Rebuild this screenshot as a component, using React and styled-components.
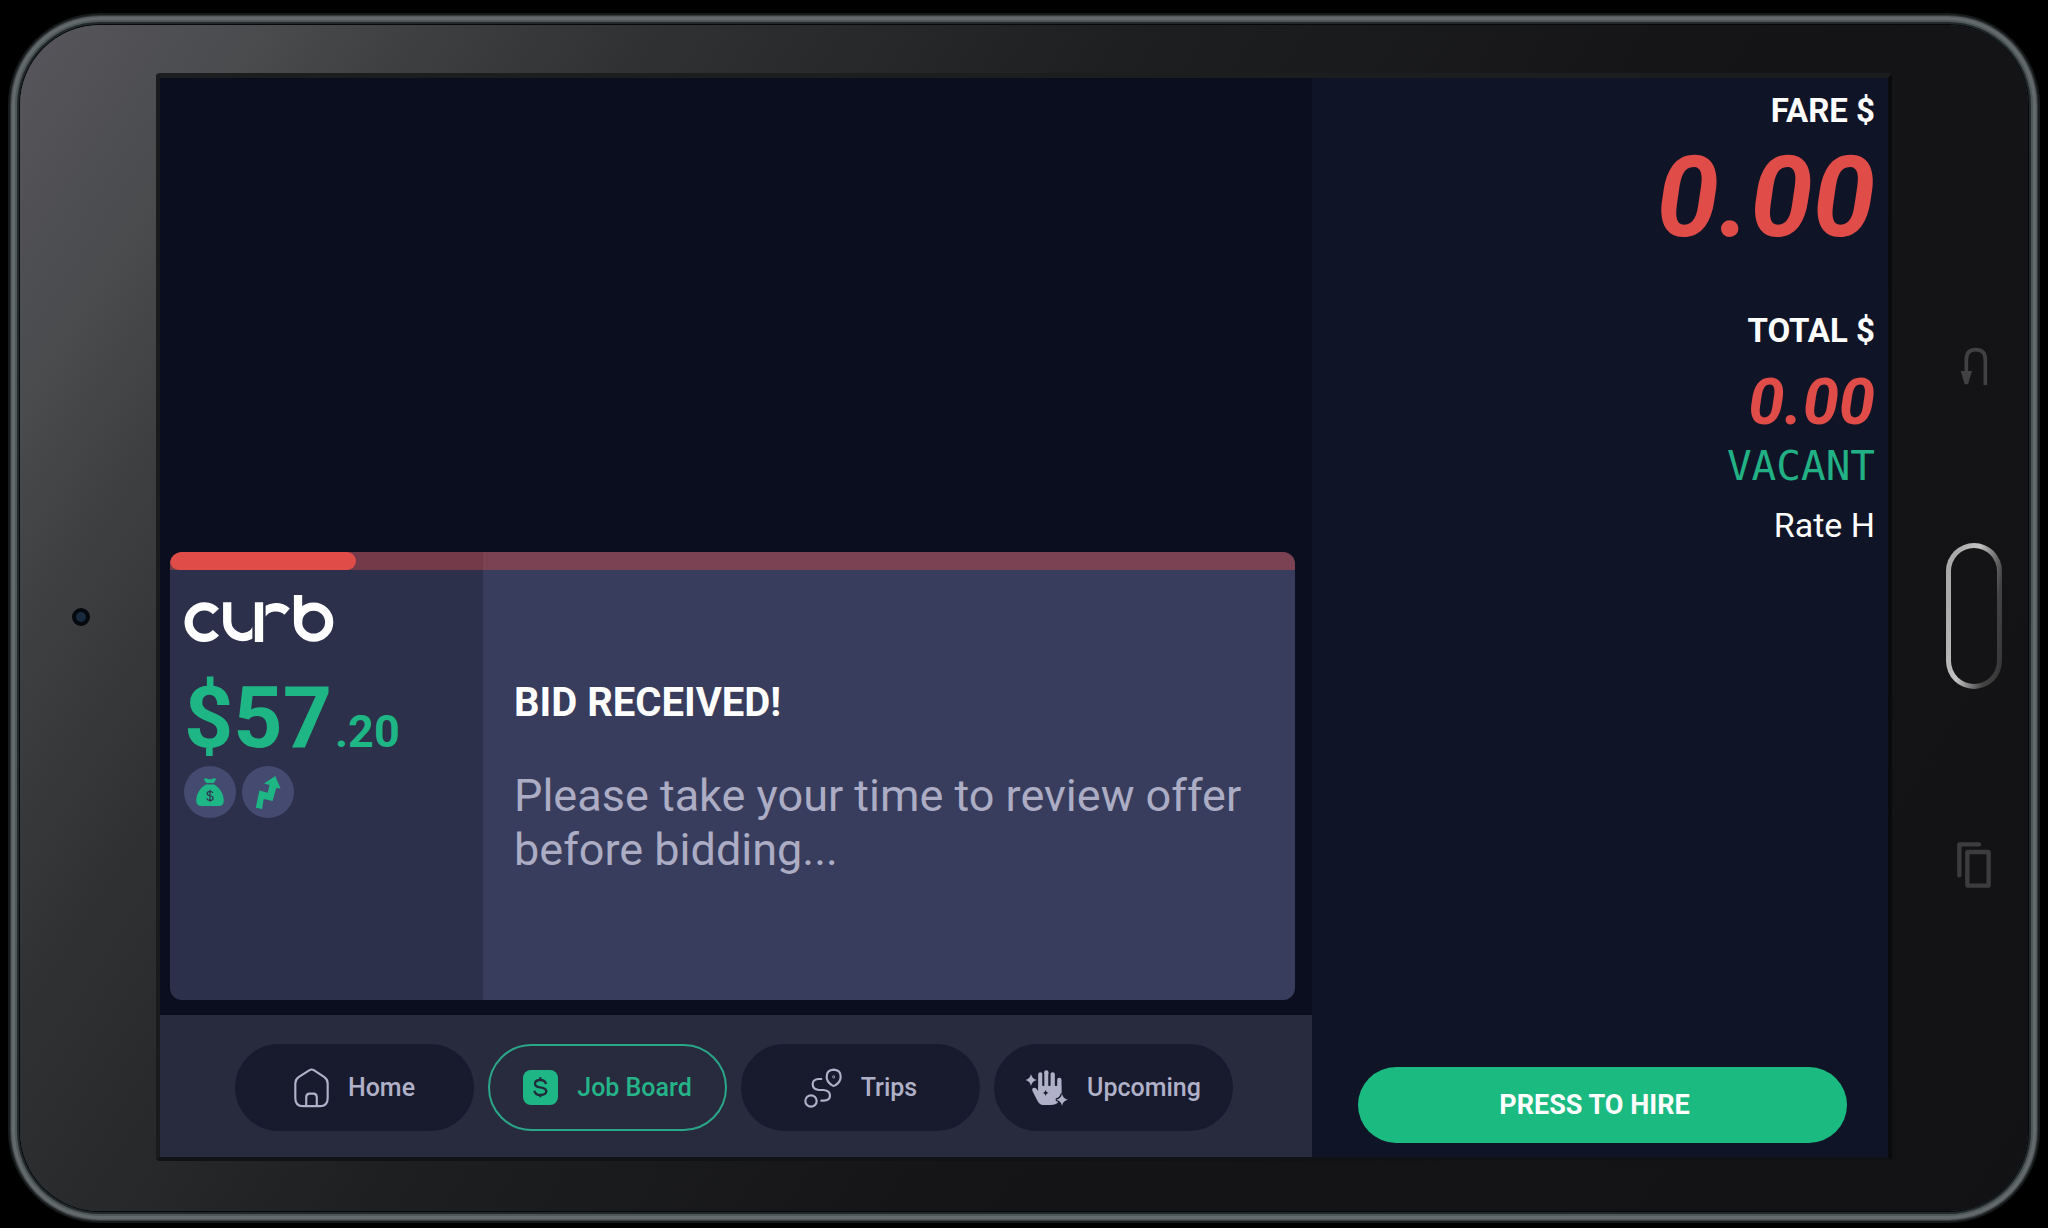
import React, { useState } from "react";
import styled, { createGlobalStyle } from "styled-components";

const GlobalStyle = createGlobalStyle`
    * {
        box-sizing: border-box;
    }

    body {
        margin: 0;
        background-color: #000;
        font-family: Roboto, "Liberation Sans", sans-serif;
        color: #fff;
    }

    button {
        font-family: inherit;
        cursor: pointer;
    }
`;

const Page = styled.div`
    display: flex;
    min-height: 100vh;
    padding: 25px 20px 17px;
`;

const Tablet = styled.div`
    flex: 1;
    display: grid;
    grid-template-columns: 136px 1fr 136px;
    padding: 48px 0 50px;
    border-radius: 80px;
    background: linear-gradient(
        123deg,
        #58565c 0%,
        #494b4d 9%,
        #3e4042 14%,
        #2f3132 23%,
        #1e1f20 40%,
        #151517 60%,
        #121214 100%
    );
    box-shadow:
        0 0 0 1px #05090b,
        0 0 0 3px #22292b,
        0 0 0 5px #4f5759,
        0 0 0 8px #636a6c,
        0 0 0 9px #555b5c,
        0 0 0 10px #363b3c,
        0 0 0 12px #181b1c;
`;

const CameraSide = styled.div`
    display: flex;
    align-items: center;
    justify-content: center;
    padding-right: 14px;
`;

const Camera = styled.span`
    width: 18px;
    height: 18px;
    border: 4px solid #06090d;
    border-radius: 50%;
    background-color: #182a3f;
`;

const KeySide = styled.div`
    display: flex;
    flex-direction: column;
    align-items: center;
    justify-content: center;
    gap: 152px;
    padding: 0 0 2px 28px;
`;

const HardKey = styled.button`
    display: flex;
    align-items: center;
    justify-content: center;
    height: 48px;
    padding: 0;
    border: none;
    background: none;
`;

const HomeKey = styled.button`
    width: 56px;
    height: 146px;
    padding: 0;
    border: 5px solid transparent;
    border-radius: 28px;
    background:
        linear-gradient(#141416, #141416) padding-box,
        linear-gradient(100deg, #aaa 15%, #c4c4c4 42%, #444 75%, #333 100%) border-box;
`;

const Screen = styled.main`
    display: grid;
    grid-template-columns: 2fr 1fr;
    border: 4px solid;
    border-width: 5px 4px 4px;
    border-color: #1c1d1e #0a0b0c #101214 #1a1b1c;
    border-radius: 4px;
    background-color: #0b0e1e;
`;

const JobSide = styled.section`
    display: flex;
    flex-direction: column;
    justify-content: flex-end;
`;

const OfferCard = styled.article`
    display: grid;
    grid-template-columns: 313px 1fr;
    grid-template-rows: 18px 430px;
    margin: 0 17px 15px 10px;
    border-radius: 12px;
    overflow: hidden;
    background: linear-gradient(90deg, #2c304a 313px, #383d5d 313px);
`;

const TimeBar = styled.div`
    grid-column: 1 / -1;
    background-color: rgba(224, 76, 72, 0.4);
`;

const TimeFill = styled.div`
    height: 100%;
    border-radius: 9px;
    background-color: #e04c48;
`;

const OfferPrice = styled.div`
    display: flex;
    flex-direction: column;
    align-items: flex-start;
    padding: 25px 14px;
`;

const Price = styled.div`
    margin-top: 42px;
    font-size: 86px;
    font-weight: 700;
    line-height: 68px;
    color: #1fb685;
`;

const Cents = styled.span`
    margin-left: 3px;
    font-size: 45px;
`;

const Tags = styled.div`
    display: flex;
    gap: 6px;
`;

const Tag = styled.span`
    display: flex;
    align-items: center;
    justify-content: center;
    width: 52px;
    height: 52px;
    border-radius: 50%;
    background-color: #444a70;
`;

const OfferMessage = styled.div`
    display: flex;
    flex-direction: column;
    justify-content: center;
    padding: 0 31px 14px;
`;

const MessageTitle = styled.h1`
    margin: 0 0 42px;
    font-size: 40px;
    font-weight: 700;
    line-height: 48px;
`;

const MessageText = styled.p`
    margin: 0;
    font-size: 45px;
    line-height: 54px;
    color: #acadc4;
`;

const Nav = styled.nav`
    display: flex;
    justify-content: center;
    gap: 14px;
    padding: 29px 24px 26px 20px;
    background-color: #282a3e;
`;

const NavButton = styled.button`
    display: flex;
    align-items: center;
    justify-content: center;
    gap: 19px;
    width: 239px;
    height: 87px;
    padding: 0;
    border: 2px solid ${({ $active }) => ($active ? "#2aa688" : "#181b2e")};
    border-radius: 44px;
    background-color: ${({ $active }) => ($active ? "transparent" : "#181b2e")};
    color: ${({ $active }) => ($active ? "#25b488" : "#b0b1c8")};
    font-size: 25px;
    font-weight: 500;
`;

const MeterSide = styled.aside`
    display: flex;
    flex-direction: column;
    align-items: flex-end;
    background-color: #101427;
`;

const Readings = styled.dl`
    flex: 1;
    margin: 0;
    padding: 13px 13px 0;
    text-align: right;
`;

const ReadingLabel = styled.dt`
    font-size: 33px;
    font-weight: 700;
    line-height: 40px;
`;

const Reading = styled.dd`
    margin: ${({ $large }) => ($large ? "1px 0 47px" : "13px 0 0")};
    font-size: ${({ $large }) => ($large ? "112px" : "65px")};
    font-weight: 700;
    font-style: italic;
    line-height: ${({ $large }) => ($large ? "132px" : "76px")};
    color: #e04c48;
`;

const MeterState = styled.dd`
    margin: 2px 0 0;
    font-family: "DejaVu Sans Mono", "Liberation Mono", monospace;
    font-size: 41px;
    line-height: 48px;
    color: #22b184;
`;

const Rate = styled.dd`
    margin: 15px 0 0;
    font-size: 34px;
    line-height: 40px;
`;

const HireButton = styled.button`
    align-self: stretch;
    height: 76px;
    margin: 0 41px 14px 46px;
    padding: 0 16px 0 0;
    border: none;
    border-radius: 38px;
    background-color: #1bba81;
    color: #fff;
    font-size: 27px;
    font-weight: 700;
`;

const CurbLogo = () => (
    <svg width="150" height="47" viewBox="72 164 450 142" role="img" aria-label="curb" fill="none" stroke="#fff" strokeWidth="25">
        <clipPath id="bowl"><rect x="180" y="180" width="97" height="130" /></clipPath>
        <clipPath id="arm"><rect x="317" y="180" width="80" height="60" /></clipPath>
        <path d="M167 214A47.500 47.500 0 1 0 167 278" />
        <path d="M201 186V246A47 47 0 0 0 290 265" clipPath="url(#bowl)" />
        <path d="M297 186V306" />
        <path d="M306 222A52 52 0 0 1 382 214" clipPath="url(#arm)" />
        <path d="M415 164V246" />
        <circle cx="462" cy="246" r="47" />
    </svg>
);

const MoneyBag = () => (
    <svg width="30" height="30" viewBox="0 0 96 96" fill="#1fb685">
        <path d="M28 6Q35 2 41 6Q48 9 55 6Q62 2 68 6L60 19H36ZM35 24H61C78 34 92 52 92 76Q92 93 75 93H21Q4 93 4 76C4 52 18 34 35 24Z" />
        <path d="M48 41V79M57 51Q55 46 48 46Q39 46 39 53Q39 59 48 60Q58 61 58 68Q58 75 48 75Q39 75 38 68" fill="none" stroke="#303553" strokeWidth="4" />
    </svg>
);

const SurgeArrow = () => (
    <svg width="28" height="35" viewBox="286 698 84 106" fill="#1fb685">
        <path d="M350 701L366 739L353 737L342 777L315 771L310 801L291 797L302 745L327 752L333 728L316 724Z" />
    </svg>
);

const HomeIcon = () => (
    <svg width="35" height="40" viewBox="225 112 106 120" fill="none" stroke="currentColor" strokeWidth="6.500">
        <path d="M272 118Q278 114 285 118L317 139Q327 146 327 158V203Q327 227 304 227H252Q229 227 229 203V158Q229 146 239 139Z" />
        <path d="M262 227V200Q262 189 272 189H284Q294 189 294 200V227" />
    </svg>
);

const JobIcon = () => (
    <svg width="35" height="35" viewBox="0 0 105 105">
        <rect width="105" height="105" rx="24" fill="#1fb685" />
        <path d="M52 22V30M52 75V82M69 42Q66 30 52 30Q36 30 36 41Q36 50 52 52Q70 55 70 64Q70 75 52 75Q37 75 34 62" fill="none" stroke="#222b3c" strokeWidth="7" />
    </svg>
);

const TripsIcon = () => (
    <svg width="38" height="40" viewBox="245 112 114 120" fill="none" stroke="currentColor" strokeWidth="6.500" strokeLinecap="round">
        <circle cx="266" cy="211" r="17" />
        <path d="M297 145H287Q271 147 271 161Q271 176 289 178H304Q323 180 323 195Q323 209 304 210H297" />
        <path d="M334 117Q355 118 355 138Q355 153 340 163Q334 168 328 163Q313 153 313 138Q313 118 334 117Z" />
        <circle cx="334" cy="139" r="1" />
    </svg>
);

const UpcomingIcon = () => (
    <svg width="42" height="36" viewBox="889 117 126 108" fill="currentColor">
        <path d="M932 130V190M950 124V190M969 130V190M989 147V185" fill="none" stroke="currentColor" strokeWidth="13" strokeLinecap="round" />
        <path d="M926 164H995V184Q995 222 962 222H940Q930 222 924 211L908 179Q906 170 914 170Q921 170 926 182Z" />
        <path d="M941 130V164M959 130V164M979 130V164" stroke="#181b2e" strokeWidth="5" fill="none" />
        <path d="M904 129Q907 144 922 147Q907 150 904 165Q901 150 887 147Q901 144 904 129Z" />
        <path d="M997 188Q1000 203 1015 206Q1000 209 997 224Q994 209 979 206Q994 203 997 188Z" stroke="#181b2e" strokeWidth="8" paintOrder="stroke" />
        <path d="M948 177Q949 185 957 186Q949 187 948 196Q947 187 939 186Q947 185 948 177Z" fill="#181b2e" />
    </svg>
);

const BackIcon = () => (
    <svg width="28" height="40" viewBox="0 0 84 120">
        <path d="M19 78V38Q19 8 47 8Q76 8 76 38V114" fill="none" stroke="#414143" strokeWidth="11" />
        <path d="M2 72H36L24 112H14Z" fill="#414143" />
    </svg>
);

const RecentsIcon = () => (
    <svg width="34" height="46" viewBox="0 0 102 138" fill="none" stroke="#3c3c3e" strokeWidth="13" strokeLinejoin="round" strokeLinecap="round">
        <path d="M7 100V7H66" />
        <rect x="31" y="30" width="64" height="101" rx="3" />
    </svg>
);

const tabs = [
    { label: "Home", Icon: HomeIcon },
    { label: "Job Board", Icon: JobIcon },
    { label: "Trips", Icon: TripsIcon },
    { label: "Upcoming", Icon: UpcomingIcon },
];

const Offer = ({ dollars, cents, timeUsed }) => (
    <OfferCard>
        <TimeBar>
            <TimeFill style={{ width: `${timeUsed}%` }} />
        </TimeBar>
        <OfferPrice>
            <CurbLogo />
            <Price>
                ${dollars}
                <Cents>.{cents}</Cents>
            </Price>
            <Tags>
                <Tag><MoneyBag /></Tag>
                <Tag><SurgeArrow /></Tag>
            </Tags>
        </OfferPrice>
        <OfferMessage>
            <MessageTitle>BID RECEIVED!</MessageTitle>
            <MessageText>Please take your time to review offer before bidding...</MessageText>
        </OfferMessage>
    </OfferCard>
);

const Meter = () => (
    <MeterSide>
        <Readings>
            <ReadingLabel>FARE $</ReadingLabel>
            <Reading $large>0.00</Reading>
            <ReadingLabel>TOTAL $</ReadingLabel>
            <Reading>0.00</Reading>
            <MeterState>VACANT</MeterState>
            <Rate>Rate H</Rate>
        </Readings>
        <HireButton type="button">PRESS TO HIRE</HireButton>
    </MeterSide>
);

const App = () => {
    const [tab, setTab] = useState("Job Board");

    return (
        <Page>
            <GlobalStyle />
            <Tablet>
                <CameraSide>
                    <Camera />
                </CameraSide>
                <Screen>
                    <JobSide>
                        <Offer dollars={57} cents={20} timeUsed={16.5} />
                        <Nav>
                            {tabs.map(({ label, Icon }) => (
                                <NavButton
                                    key={label}
                                    type="button"
                                    $active={label === tab}
                                    onClick={() => setTab(label)}
                                >
                                    <Icon />
                                    {label}
                                </NavButton>
                            ))}
                        </Nav>
                    </JobSide>
                    <Meter />
                </Screen>
                <KeySide>
                    <HardKey type="button" aria-label="Back"><BackIcon /></HardKey>
                    <HomeKey type="button" aria-label="Home key" />
                    <HardKey type="button" aria-label="Recent apps"><RecentsIcon /></HardKey>
                </KeySide>
            </Tablet>
        </Page>
    );
};

export default App;
